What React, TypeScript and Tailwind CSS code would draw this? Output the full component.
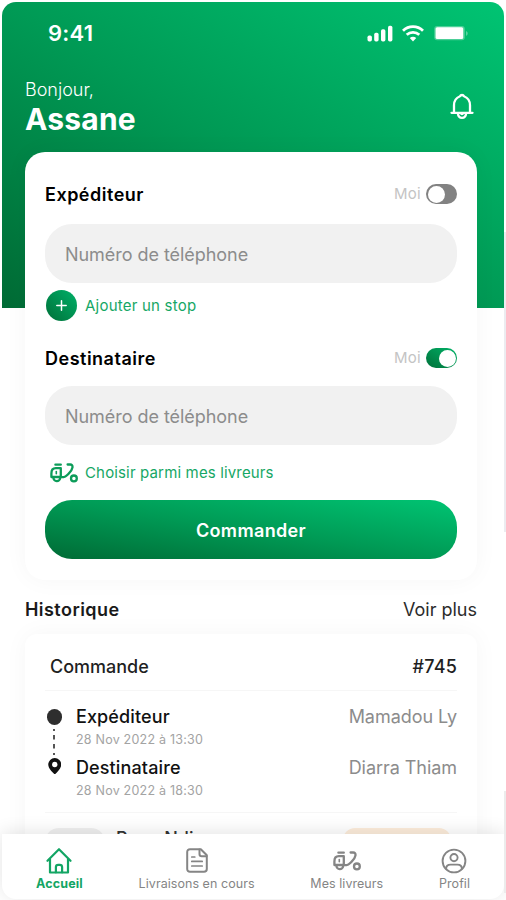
import React from 'react'

interface IconProps {
  className?: string
}

const SignalIcon: React.FC<IconProps> = ({ className }) => (
  <svg className={className} viewBox="0 0 26 17" fill="currentColor">
    <rect x="0.5" y="10.5" width="4.4" height="6" rx="1.7" />
    <rect x="7.2" y="7.7" width="4.4" height="8.8" rx="1.7" />
    <rect x="14" y="4.3" width="4.4" height="12.2" rx="1.7" />
    <rect x="21" y="0.8" width="4.4" height="15.7" rx="1.7" />
  </svg>
)

const WifiIcon: React.FC<IconProps> = ({ className }) => (
  <svg className={className} viewBox="0 0 22 17" fill="none" stroke="currentColor" strokeWidth="2.8">
    <path d="M1 5.7C6.7.3 15.3.3 21 5.7" />
    <path d="M4.7 9.8c3.6-3.3 9-3.3 12.6 0" />
    <path d="M11 16.4l-3.2-3.5c1.9-1.5 4.5-1.5 6.4 0z" fill="currentColor" stroke="none" />
  </svg>
)

const BatteryIcon: React.FC<IconProps> = ({ className }) => (
  <svg className={className} viewBox="0 0 36 17">
    <rect x="1.2" y="0.9" width="30.6" height="14.4" rx="3" fill="#fff" fillOpacity=".3" />
    <rect x="2.6" y="2.2" width="27.6" height="11.8" rx="1.6" fill="#fff" />
    <path d="M33 6v4.8c1-.4 1.7-1.3 1.7-2.4S34 6.4 33 6z" fill="#fff" fillOpacity=".35" />
  </svg>
)

const BellIcon: React.FC<IconProps> = ({ className }) => (
  <svg className={className} viewBox="0 0 24 27" fill="none" stroke="currentColor" strokeWidth="2.3" strokeLinecap="round" strokeLinejoin="round">
    <path d="M1.5 19.8h21" />
    <path d="M4 19.6v-7.4c0-4.2 2.5-7.600 6-9 .7-1.600 3.300-1.600 4 0 3.500 1.400 6 4.800 6 9v7.400" />
    <path d="M7.8 20.2c.3 3 1.900 4.700 4.200 4.700s3.900-1.700 4.200-4.700" />
    <path d="M10.5 20.4c.2.9.7 1.3 1.5 1.3s1.3-.4 1.5-1.3" strokeWidth="1.3" />
  </svg>
)

const ScooterIcon: React.FC<IconProps> = ({ className }) => (
  <svg className={className} viewBox="0 0 28 20" fill="none" stroke="currentColor" strokeWidth="2.3" strokeLinecap="round" strokeLinejoin="round">
    <path d="M5.4 1.7h5.4" />
    <path d="M10.8 5.2v8.8H1.4v-3.6c0-3.2 1.7-5.2 4.4-5.2z" />
    <path d="M6.3 8.6v2.2" strokeWidth="1.6" />
    <path d="M3.4 14.6a3.4 3.4 0 0 0 6.8.2" />
    <path d="M17.6 1.5h2.6c1.6 0 2.5 1.2 2.3 2.8-.5 3.4-2.7 5.2-4.7 7.2-1.5 1.6-2.2 2.7-4.2 2.7h-2.4" />
    <circle cx="23.9" cy="15.4" r="2.9" />
  </svg>
)

const PinIcon: React.FC<IconProps> = ({ className }) => (
  <svg className={className} viewBox="0 0 13 16">
    <path d="M6.5 0A6.3 6.3 0 0 0 .2 6.3C.2 10 4.2 13.7 6.5 16c2.3-2.3 6.3-6 6.3-9.7A6.3 6.3 0 0 0 6.5 0z" fill="#111" />
    <circle cx="6.5" cy="6.3" r="2.6" fill="#fff" />
  </svg>
)

const HomeIcon: React.FC<IconProps> = ({ className }) => (
  <svg className={className} viewBox="0 0 26 27" fill="none" stroke="currentColor" strokeWidth="2.2" strokeLinecap="round" strokeLinejoin="round">
    <path d="M1.5 13.8L13 2.2l11.5 11.6" />
    <path d="M4 12v13.5h18V12" />
    <path d="M9.9 25.3v-5.2c0-1.5.8-2.3 2.3-2.3h1.6c1.5 0 2.3.8 2.3 2.3v5.2" />
  </svg>
)

const DocumentIcon: React.FC<IconProps> = ({ className }) => (
  <svg className={className} viewBox="0 0 22 25" fill="none" stroke="currentColor" strokeWidth="2" strokeLinecap="round" strokeLinejoin="round">
    <path d="M4 1.2h10.8l6 6V21c0 1.7-1.1 2.8-2.8 2.8H4c-1.7 0-2.8-1.1-2.8-2.8V4c0-1.7 1.1-2.8 2.8-2.8z" />
    <path d="M13.5 1.5v4.6c0 1.4.8 2.2 2.2 2.2h4.8" />
    <path d="M5.8 9h3M5.8 13.4h10.4M5.8 18h10.4" strokeWidth="1.7" />
  </svg>
)

const ProfileIcon: React.FC<IconProps> = ({ className }) => (
  <svg className={className} viewBox="0 0 26 26" fill="none" stroke="currentColor" strokeWidth="1.9">
    <circle cx="13" cy="13" r="11.4" />
    <circle cx="13" cy="9.6" r="3.6" />
    <path d="M5.2 21.2c-.3-3 1.5-4.6 4.3-4.6h7c2.8 0 4.6 1.6 4.3 4.6" />
  </svg>
)

interface ContactHeaderProps {
  label: string
  checked: boolean
}

const ContactHeader: React.FC<ContactHeaderProps> = ({ label, checked }) => (
  <div className="flex h-6 items-center justify-between">
    <h2 className="text-[18px] font-semibold tracking-[0.5px] text-black">{label}</h2>
    <div className="flex items-center gap-[5px]">
      <span className="pt-px text-[15px] tracking-[0.3px] text-[#c4c4c4]">Moi</span>
      {checked ? (
        <span className="flex h-5 w-[31px] items-center justify-end rounded-full bg-linear-to-tr from-[#00713a] to-[#00b368] p-[1.5px]">
          <span className="size-[17px] rounded-full bg-white" />
        </span>
      ) : (
        <span className="flex h-5 w-[31px] items-center rounded-full bg-[#828282] p-[1.5px]">
          <span className="size-[17px] rounded-full bg-white" />
        </span>
      )}
    </div>
  </div>
)

const PhoneInput = () => (
  <input
    type="tel"
    placeholder="Numéro de téléphone"
    className="block h-[59px] w-full rounded-[27px] bg-[#f1f1f1] px-5 pt-[2px] text-[18px] tracking-[-0.05px] placeholder:text-[#8c8c8c]"
  />
)

interface StopProps {
  title: string
  date: string
  person: string
}

const Stop: React.FC<StopProps> = ({ title, date, person }) => (
  <div className="h-[51.5px]">
    <div className="flex h-6 items-center justify-between">
      <span className="text-[18px] font-medium tracking-[0.12px] text-[#111]">{title}</span>
      <span className="text-[18px] tracking-[-0.05px] text-[#8c8c8c]">{person}</span>
    </div>
    <div className="flex h-[22px] items-center pt-[2px] text-[12.5px] tracking-[0.22px] text-[#a3a3a3]">{date}</div>
  </div>
)

const navItems = [
  { label: 'Accueil', Icon: HomeIcon, iconClass: 'h-[27px] w-[26px]', active: true },
  { label: 'Livraisons en cours', Icon: DocumentIcon, iconClass: 'h-[25px] w-[22px]', active: false },
  { label: 'Mes livreurs', Icon: ScooterIcon, iconClass: 'h-5 w-7', active: false },
  { label: 'Profil', Icon: ProfileIcon, iconClass: 'size-[26px]', active: false },
]

export default function App() {
  return (
    <div className="relative h-[900px] w-[506px] overflow-hidden bg-white font-['Inter',sans-serif]">
      {/* scroll area, cut off by the bottom navigation */}
      <div className="h-[834px] overflow-hidden px-[2px] pt-[2px]">
        <header className="h-[306px] w-[501.5px] rounded-t-[14px] bg-linear-[to_top_right,#006b35_0%,#009a55_50%,#00c473_100%] text-white">
          <div className="flex h-[62px] items-center justify-between pr-[35px] pl-[46px]">
            <span className="text-[22px] font-semibold tracking-[0.2px]">9:41</span>
            <div className="flex items-center gap-[9px]">
              <SignalIcon className="h-[17px] w-[26px]" />
              <WifiIcon className="h-[17px] w-[22px]" />
              <BatteryIcon className="h-[17px] w-9" />
            </div>
          </div>
          <div className="flex items-start justify-between pt-[14px] pr-[30px] pl-[23px]">
            <div>
              <p className="text-[18px] leading-6 font-light">Bonjour,</p>
              <p className="text-[30px] leading-[34px] font-bold tracking-[0.2px]">Assane</p>
            </div>
            <BellIcon className="mt-[15px] h-[27px] w-6" />
          </div>
        </header>

        <main className="-mt-[156px] px-[23px]">
          <section className="h-[428px] w-[452px] rounded-[20px] bg-white px-5 pt-[30px] shadow-[0_0_24px_rgba(0,0,0,0.04)]">
            <ContactHeader label="Expéditeur" checked={false} />
            <div className="pt-[17.5px]">
              <PhoneInput />
            </div>
            <button className="mt-[7px] flex h-8 items-center gap-2 pl-px text-[15px] tracking-[0.22px] text-[#16a765]">
              <span className="flex size-[31px] items-center justify-center rounded-full bg-linear-to-tr from-[#007039] to-[#00b169]">
                <svg className="size-[11px]" viewBox="0 0 11 11" stroke="#fff" strokeWidth="1.5" strokeLinecap="round">
                  <path d="M5.5.8v9.4M.8 5.5h9.4" />
                </svg>
              </span>
              <span className="pt-[2px]">Ajouter un stop</span>
            </button>
            <div className="pt-[24.5px]">
              <ContactHeader label="Destinataire" checked />
            </div>
            <div className="pt-[15.5px]">
              <PhoneInput />
            </div>
            <button className="mt-4 flex h-6 items-center gap-[7px] pl-[5px] text-[15px] tracking-[0.15px] text-[#16a765]">
              <ScooterIcon className="h-5 w-7 text-[#0c9c59]" />
              <span className="pt-[2px]">Choisir parmi mes livreurs</span>
            </button>
            <button className="mt-[15px] h-[59px] w-full rounded-[27px] bg-linear-[to_top_right,#006b35_0%,#009a55_50%,#00c473_100%] pt-[3px] text-[18px] font-semibold tracking-[0.35px] text-white">
              Commander
            </button>
          </section>

          <div className="flex h-[54px] w-[452px] items-center justify-between pt-[5px]">
            <h2 className="text-[18px] font-semibold tracking-[0.45px] text-[#1a1a1a]">Historique</h2>
            <a className="text-[18px] text-[#2b2b2b]">Voir plus</a>
          </div>

          <section className="h-[260px] w-[452px] rounded-[12px] bg-white px-5 shadow-[0_0_24px_rgba(0,0,0,0.04)]">
            <div className="flex h-[57px] items-center justify-between border-b border-[#f6f6f6] pt-[9px] pl-[5px] text-[18px] font-medium text-[#1f1f1f]">
              <span>Commande</span>
              <span className="tracking-[0.2px]">#745</span>
            </div>
            <div className="flex h-[122px] border-b border-[#f6f6f6] pt-[13px]">
              <div className="flex w-[31px] flex-col pt-[5px]">
                <span className="ml-[1.5px] size-[15.5px] rounded-full bg-[#2e2e2e]" />
                <svg className="ml-[7px] h-[33px] w-1" viewBox="0 0 4 33" stroke="#555" strokeWidth="2">
                  <path d="M2 4v2M2 10v4.5M2 19v4.5M2 28v2" />
                </svg>
                <PinIcon className="ml-[2.5px] h-[16.5px] w-[13.5px]" />
              </div>
              <div className="flex-1">
                <Stop title="Expéditeur" date="28 Nov 2022 à 13:30" person="Mamadou Ly" />
                <Stop title="Destinataire" date="28 Nov 2022 à 18:30" person="Diarra Thiam" />
              </div>
            </div>
            <div className="flex items-start pt-[15px]">
              <div className="h-10 w-[60px] rounded-[14px] bg-[#f0f0f0]" />
              <span className="ml-[11px] text-[18px] leading-[22px] font-medium text-[#333]">Pape Ndiaye</span>
              <div className="mr-1.5 ml-auto h-9 w-[108px] rounded-[12px] bg-[#fdeddb]" />
            </div>
          </section>
        </main>
      </div>

      <nav className="relative mx-[2px] flex h-[65px] justify-between rounded-b-[14px] bg-white px-[34px] shadow-[0_-2px_18px_rgba(0,0,0,0.11)]">
        {navItems.map(({ label, Icon, iconClass, active }) => (
          <a key={label} className={active ? 'flex flex-col items-center text-[#13a564]' : 'flex flex-col items-center text-[#858585]'}>
            <span className="flex h-10 items-end">
              <span className="flex h-[27px] items-center">
                <Icon className={iconClass} />
              </span>
            </span>
            <span className={active ? 'text-[12.5px] leading-5 font-bold tracking-[0.15px]' : 'text-[12.5px] leading-5 tracking-[0.05px]'}>
              {label}
            </span>
          </a>
        ))}
      </nav>

      {/* faint side keys of the device */}
      <div className="absolute top-[232px] right-0 h-[300px] w-[2px] bg-[#ececf0]" />
      <div className="absolute top-[791px] right-0 h-[102px] w-[2px] bg-[#ececec]" />
    </div>
  )
}
